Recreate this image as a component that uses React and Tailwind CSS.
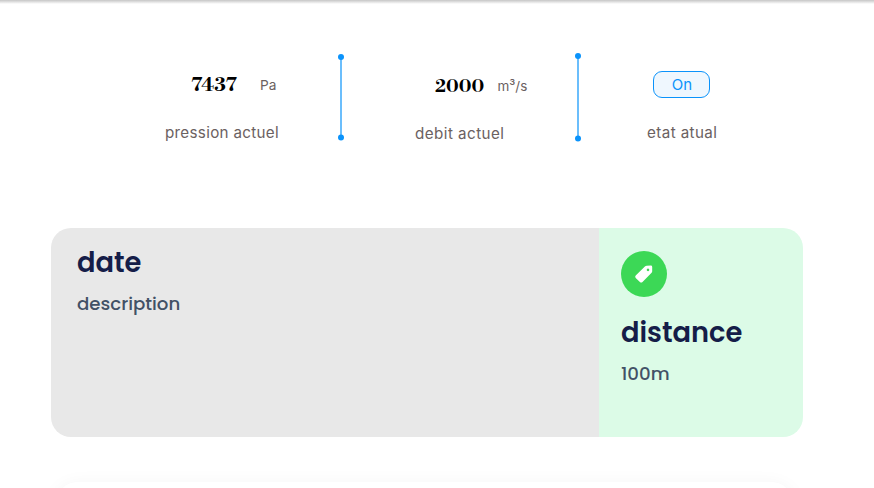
function Divider({ height }) {
  return (
    <svg width="8" height={height} className="shrink-0 text-[#0b93fb]" fill="currentColor">
      <rect x="3.4" y="3" width="1.2" height={height - 6} />
      <circle cx="4" cy="4" r="3" />
      <circle cx="4" cy={height - 3.5} r="3" />
    </svg>
  );
}

function TagIcon() {
  return (
    <svg width="20" height="20" viewBox="0 0 20 20" fill="#fff">
      <path
        fillRule="evenodd"
        d="M10.9 2.4 Q11.7 1.7 12.7 1.7 L16.8 1.5 Q18.2 1.5 18.2 2.9 L18.2 7.3 Q18.2 8.1 17.6 8.7 L8.5 18 Q7.2 19.2 5.9 18 L1.7 13.9 Q.6 12.7 1.7 11.5 Z M14 4.6 a1.3 1.3 0 1 0 .01 0 Z"
      />
    </svg>
  );
}

export default function App() {
  return (
    <div className="h-[488px] w-[874px] overflow-hidden bg-white font-['Inter','Liberation_Sans',sans-serif]">
      <div className="h-1 bg-linear-to-b from-[#c6c6c6] to-white" />

      <section className="flex h-[224.4px] items-start text-[#6b6161]">
        <div className="ml-[165px] w-[172px] pt-[69px]">
          <div className="flex h-6 items-center pl-[26px]">
            <span className="w-[69px] font-['Libre_Bodoni','Liberation_Serif',serif] text-[19.4px] leading-6 font-bold text-black">
              7437
            </span>
            <span className="pt-px text-[13.7px]">Pa</span>
          </div>
          <p className="mt-[25px] text-[15.2px] leading-[22px] tracking-[0.3px] whitespace-nowrap">pression actuel</p>
        </div>
        <div className="pt-[49px]">
          <Divider height={88} />
        </div>
        <div className="ml-[70px] w-[159px] pt-[70px]">
          <div className="flex h-6 items-center pl-5">
            <span className="w-[62.5px] pt-px font-['Libre_Bodoni','Liberation_Serif',serif] text-[17.5px] leading-6 font-bold text-black">
              2000
            </span>
            <span className="text-[13.5px] whitespace-nowrap">m³/s</span>
          </div>
          <p className="mt-[25px] text-[15.2px] leading-[22px] tracking-[0.45px] whitespace-nowrap">debit actuel</p>
        </div>
        <div className="pt-12">
          <Divider height={90} />
        </div>
        <div className="ml-[65px] pt-[66.5px]">
          <div className="ml-1.5 flex h-[27px] w-[57px] items-center justify-center rounded-[9px] border border-[#0b93fb] bg-[#eff7fe] pt-0.5 pl-px text-[15px] text-[#0b93fb]">
            On
          </div>
          <p className="mt-6 text-[15.2px] leading-[22px] tracking-[0.4px] whitespace-nowrap">etat atual</p>
        </div>
      </section>

      <section className="mx-[51px] flex h-[208.4px] w-[752px] overflow-hidden rounded-[20px] font-['Poppins','Inter',sans-serif]">
        <div className="w-[548px] bg-[#e8e8e8] pt-[14.2px] pl-[26px]">
          <h2 className="text-[27.3px] leading-10 font-semibold text-[#151d48]">date</h2>
          <p className="mt-[9px] text-[18.2px] leading-6 font-medium text-[#425166]">description</p>
        </div>
        <div className="w-[204px] bg-[#dcfbe7] pt-[22.6px] pl-[22px]">
          <div className="flex size-[46px] items-center justify-center rounded-full bg-[#3cd856]">
            <TagIcon />
          </div>
          <h2 className="mt-[15.6px] text-[27.3px] leading-10 font-semibold text-[#151d48]">distance</h2>
          <p className="mt-[9px] text-[18.2px] leading-6 font-medium text-[#425166]">100m</p>
        </div>
      </section>

      <section className="mx-[57px] mt-[45px] h-40 w-[735px] rounded-[20px] bg-white shadow-[0_4px_20px_rgba(0,0,0,0.06)]" />
    </div>
  );
}
